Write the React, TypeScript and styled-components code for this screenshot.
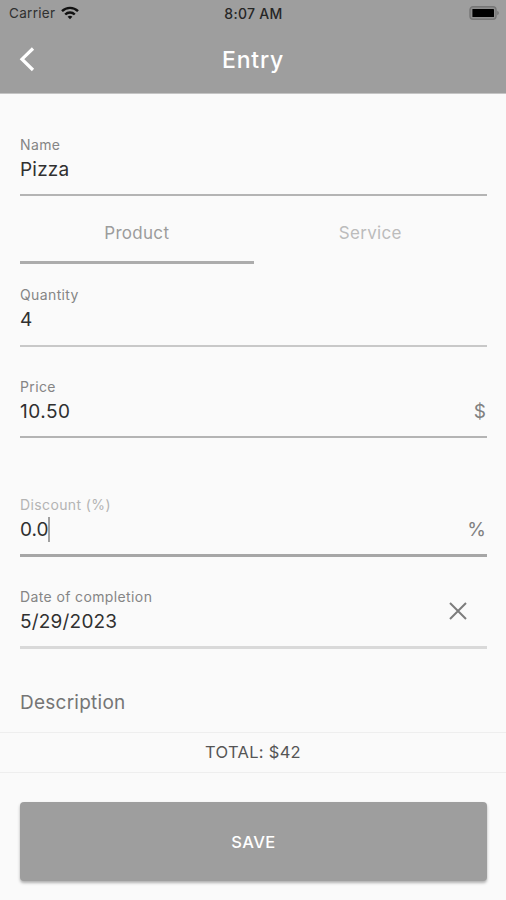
import React from "react";
import styled, { createGlobalStyle } from "styled-components";

const GlobalStyle = createGlobalStyle`
  * { box-sizing: border-box; }
  body { margin: 0; background: #fafafa; font-family: Inter, Roboto, sans-serif; }
`;

const Screen = styled.div`
  width: 506px;
  height: 900px;
  display: flex;
  flex-direction: column;
  background: #fafafa;
  overflow: hidden;
`;

const Header = styled.header`
  height: 94px;
  flex: none;
  background: #9e9e9e;
  border-bottom: 1px solid #c4c4c4;
`;

const StatusBar = styled.div`
  height: 26px;
  display: grid;
  grid-template-columns: 1fr auto 1fr;
  align-items: center;
  padding: 0 6px 0 9px;
  color: #303030;
  font-size: 13.5px;
`;

const Carrier = styled.div`
  display: flex;
  align-items: center;
  gap: 6px;
  letter-spacing: 0.3px;
`;

const Clock = styled.div`
  font-size: 14px;
  font-weight: 500;
  letter-spacing: 0.3px;
  margin-left: -2px;
  color: #262626;
`;

const BatteryIcon = styled.svg`
  justify-self: end;
  display: block;
`;

const NavBar = styled.div`
  height: 66px;
  display: grid;
  grid-template-columns: 60px 1fr 60px;
  align-items: center;
`;

const BackButton = styled.button`
  border: 0;
  padding: 0 0 0 18px;
  background: none;
  display: flex;
`;

const Title = styled.h1`
  margin: 1px 0 0;
  text-align: center;
  font-size: 23px;
  font-weight: 500;
  letter-spacing: 0.75px;
  line-height: 30px;
  color: #fff;
`;

const Form = styled.main`
  height: 638px;
  flex: none;
  padding: 42px 19px 0 20px;
`;

const Field = styled.div<{ $gap?: number; $line?: string; $thickness?: number }>`
  display: grid;
  grid-template-rows: 17px 33px 1fr;
  grid-template-columns: 1fr auto;
  height: ${(p) => 58 + (p.$thickness ?? 2)}px;
  margin-top: ${(p) => p.$gap ?? 0}px;
  border-bottom: ${(p) => p.$thickness ?? 2}px solid ${(p) => p.$line ?? "#b4b4b4"};
`;

const QuantityField = styled(Field)`
  height: 61px;
`;

const Label = styled.label<{ $active?: boolean }>`
  grid-column: 1 / -1;
  font-size: 14px;
  line-height: 17px;
  letter-spacing: 0.38px;
  color: ${(p) => (p.$active ? "#b4b4b4" : "#858585")};
`;

const Value = styled.div<{ $spacing?: number }>`
  display: flex;
  align-items: center;
  font-size: 19px;
  line-height: 33px;
  letter-spacing: ${(p) => p.$spacing ?? 0.2}px;
  color: #303030;
`;

const Suffix = styled.div`
  font-size: 19px;
  line-height: 33px;
  padding-right: 1px;
  color: #808080;
`;

const Caret = styled.span`
  width: 2px;
  height: 25px;
  background: #a0a0a0;
`;

const ClearButton = styled.button`
  border: 0;
  padding: 0;
  margin: -3px 20px 0 0;
  background: none;
  display: flex;
  align-self: start;
`;

const Tabs = styled.div`
  display: grid;
  grid-template-columns: 1fr 1fr;
`;

const Tab = styled.button<{ $selected?: boolean }>`
  height: 68px;
  padding: 8px 0 0;
  border: 0;
  border-bottom: 3px solid ${(p) => (p.$selected ? "#acacac" : "transparent")};
  background: none;
  font: 400 17px Inter, Roboto, sans-serif;
  letter-spacing: 0.3px;
  color: ${(p) => (p.$selected ? "#9c9c9c" : "#bcbcbc")};
`;

const Description = styled.div`
  margin-top: 39px;
  font-size: 19px;
  line-height: 30px;
  letter-spacing: 0.25px;
  color: #757575;
`;

const Total = styled.div`
  height: 41px;
  flex: none;
  border-top: 1px solid #eeeeee;
  border-bottom: 1px solid #eeeeee;
  text-align: center;
  font-size: 16.5px;
  line-height: 39px;
  letter-spacing: 0.3px;
  color: #555;
`;

const SaveButton = styled.button`
  height: 79px;
  flex: none;
  margin: 29px 19px 0 20px;
  border: 0;
  border-radius: 4px;
  background: #9e9e9e;
  box-shadow: 0 2px 3px rgba(0, 0, 0, 0.3);
  color: #fff;
  font: 500 16.5px Inter, Roboto, sans-serif;
  letter-spacing: 0.4px;
`;

export default function App() {
  return (
    <Screen>
      <GlobalStyle />
      <Header>
        <StatusBar>
          <Carrier>
            Carrier
            <svg width="18" height="14" viewBox="0 0 18 14" fill="none" stroke="#111" strokeWidth="2.4">
              <path d="M1 5.2C5.5.7 12.5.7 17 5.2" />
              <path d="M4.2 8.5c2.7-2.7 6.9-2.7 9.6 0" />
              <path d="M6.6 10.8c1.4-1.3 3.4-1.3 4.8 0L9 13.2z" fill="#111" stroke="none" />
            </svg>
          </Carrier>
          <Clock>8:07 AM</Clock>
          <BatteryIcon width="31" height="14" viewBox="0 0 31 14">
            <rect x="1" y="0.8" width="26" height="12.4" rx="3" fill="#8e8e8e" stroke="#767676" strokeWidth="1.4" />
            <rect x="3.4" y="3" width="21.6" height="8" rx="0.6" fill="#000" />
            <path d="M28.3 4.8c2 .8 2 3.6 0 4.4z" fill="#6f6f6f" />
          </BatteryIcon>
        </StatusBar>
        <NavBar>
          <BackButton aria-label="Back">
            <svg width="18" height="26" viewBox="0 0 18 26" fill="none" stroke="#fff" strokeWidth="3.2">
              <path d="M15 2.5L4 13.2L15 24" />
            </svg>
          </BackButton>
          <Title>Entry</Title>
        </NavBar>
      </Header>

      <Form>
        <Field>
          <Label>Name</Label>
          <Value>Pizza</Value>
        </Field>
        <Tabs>
          <Tab $selected>Product</Tab>
          <Tab>Service</Tab>
        </Tabs>
        <QuantityField $gap={22} $line="#c8c8c8">
          <Label>Quantity</Label>
          <Value>4</Value>
        </QuantityField>
        <Field $gap={31}>
          <Label>Price</Label>
          <Value $spacing={0.5}>10.50</Value>
          <Suffix>$</Suffix>
        </Field>
        <Field $gap={58} $line="#a6a6a6" $thickness={3}>
          <Label $active>Discount (%)</Label>
          <Value $spacing={0}>
            0.0
            <Caret />
          </Value>
          <Suffix>%</Suffix>
        </Field>
        <Field $gap={31} $line="#d9d9d9" $thickness={3}>
          <Label>Date of completion</Label>
          <Value>5/29/2023</Value>
          <ClearButton aria-label="Clear date">
            <svg width="18" height="18" viewBox="0 0 18 18" stroke="#7c7c7c" strokeWidth="2">
              <path d="M1 1l16 16M17 1L1 17" />
            </svg>
          </ClearButton>
        </Field>
        <Description>Description</Description>
      </Form>

      <Total>TOTAL: $42</Total>
      <SaveButton>SAVE</SaveButton>
    </Screen>
  );
}
